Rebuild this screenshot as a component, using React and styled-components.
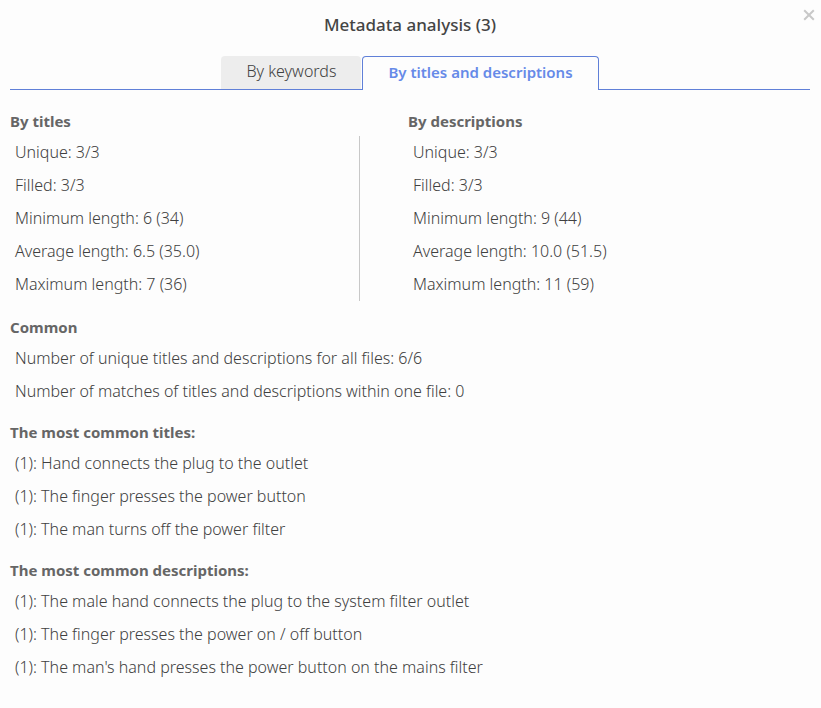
import React, { useState } from "react";
import styled, { createGlobalStyle } from "styled-components";

const GlobalStyle = createGlobalStyle`
  *, *::before, *::after { box-sizing: border-box; }
  body {
    margin: 0;
    background: #fdfdfd;
    color: #404040;
    font-family: "Noto Sans", "Open Sans", sans-serif;
    font-size: 16px;
    font-weight: 300;
  }
`;

const Dialog = styled.main`
  position: relative;
  padding: 8px 11px 20px 10px;
`;

const Title = styled.h1`
  margin: 0 0 14px;
  color: #444;
  font-size: 17px;
  line-height: 34px;
  font-weight: 500;
  text-align: center;
`;

const CloseButton = styled.button`
  position: absolute;
  top: 6px;
  right: 3px;
  display: flex;
  align-items: center;
  justify-content: center;
  width: 18px;
  height: 18px;
  padding: 0;
  border: 0;
  background: none;
  color: #c8c8c8;
  cursor: pointer;
`;

const TabBar = styled.div`
  display: flex;
  justify-content: center;
  gap: 1px;
  border-bottom: 1px solid #6080d8;
`;

const Tab = styled.button`
  height: ${({ $active }) => ($active ? 34 : 33)}px;
  margin-bottom: ${({ $active }) => ($active ? -1 : 0)}px;
  padding: 0 25px 3px;
  border: ${({ $active }) => ($active ? "1px solid #6080d8" : "0")};
  border-bottom: 0;
  border-radius: 4px 4px 0 0;
  background: ${({ $active }) => ($active ? "#fdfdfd" : "#ededed")};
  color: ${({ $active }) => ($active ? "#668ae8" : "#404040")};
  font-family: inherit;
  font-size: ${({ $active }) => ($active ? 15 : 16)}px;
  line-height: 30px;
  font-weight: ${({ $active }) => ($active ? 600 : 300)};
  cursor: pointer;
`;

const Panel = styled.div`
  padding-top: 17px;
`;

const Columns = styled.div`
  display: grid;
  grid-template-columns: 1fr 1fr;
  padding-right: 4px;
  margin-bottom: 2px;
`;

const Section = styled.section`
  & + & { margin-top: 10px; }
  ${Columns} & + & { margin-top: 0; }
  ${Columns} + & { margin-top: 12px; }
`;

const Heading = styled.h2`
  margin: 0;
  color: #666;
  font-size: 15px;
  line-height: 29px;
  font-weight: 700;
`;

const List = styled.ul`
  margin: 0 ${({ $divided }) => ($divided ? 48 : 0)}px 0 0;
  padding: 0 5px;
  border-right: ${({ $divided }) => ($divided ? "1px solid #c8c8c8" : "0")};
  list-style: none;
`;

const Item = styled.li`
  line-height: 33px;
`;

const titleStats = [
  "Unique: 3/3",
  "Filled: 3/3",
  "Minimum length: 6 (34)",
  "Average length: 6.5 (35.0)",
  "Maximum length: 7 (36)",
];

const descriptionStats = [
  "Unique: 3/3",
  "Filled: 3/3",
  "Minimum length: 9 (44)",
  "Average length: 10.0 (51.5)",
  "Maximum length: 11 (59)",
];

const commonStats = [
  "Number of unique titles and descriptions for all files: 6/6",
  "Number of matches of titles and descriptions within one file: 0",
];

const commonTitles = [
  "(1): Hand connects the plug to the outlet",
  "(1): The finger presses the power button",
  "(1): The man turns off the power filter",
];

const commonDescriptions = [
  "(1): The male hand connects the plug to the system filter outlet",
  "(1): The finger presses the power on / off button",
  "(1): The man's hand presses the power button on the mains filter",
];

function StatSection({ title, items, divided }) {
  return (
    <Section>
      <Heading>{title}</Heading>
      <List $divided={divided}>
        {items.map((item) => (
          <Item key={item}>{item}</Item>
        ))}
      </List>
    </Section>
  );
}

export default function App() {
  const [tab, setTab] = useState("titles");
  return (
    <>
      <GlobalStyle />
      <Dialog>
        <Title>Metadata analysis (3)</Title>
        <CloseButton type="button" aria-label="Close">
          <svg width="12" height="12" viewBox="0 0 12 12" fill="none" stroke="currentColor" strokeWidth="2">
            <path d="M1.2 1.2 10.8 10.8M10.8 1.2 1.2 10.8" />
          </svg>
        </CloseButton>
        <TabBar role="tablist">
          <Tab
            type="button"
            role="tab"
            aria-selected={tab === "keywords"}
            $active={tab === "keywords"}
            onClick={() => setTab("keywords")}
          >
            By keywords
          </Tab>
          <Tab
            type="button"
            role="tab"
            aria-selected={tab === "titles"}
            $active={tab === "titles"}
            onClick={() => setTab("titles")}
          >
            By titles and descriptions
          </Tab>
        </TabBar>
        {tab === "titles" && (
          <Panel role="tabpanel">
            <Columns>
              <StatSection title="By titles" items={titleStats} divided />
              <StatSection title="By descriptions" items={descriptionStats} />
            </Columns>
            <StatSection title="Common" items={commonStats} />
            <StatSection title="The most common titles:" items={commonTitles} />
            <StatSection title="The most common descriptions:" items={commonDescriptions} />
          </Panel>
        )}
      </Dialog>
    </>
  );
}
